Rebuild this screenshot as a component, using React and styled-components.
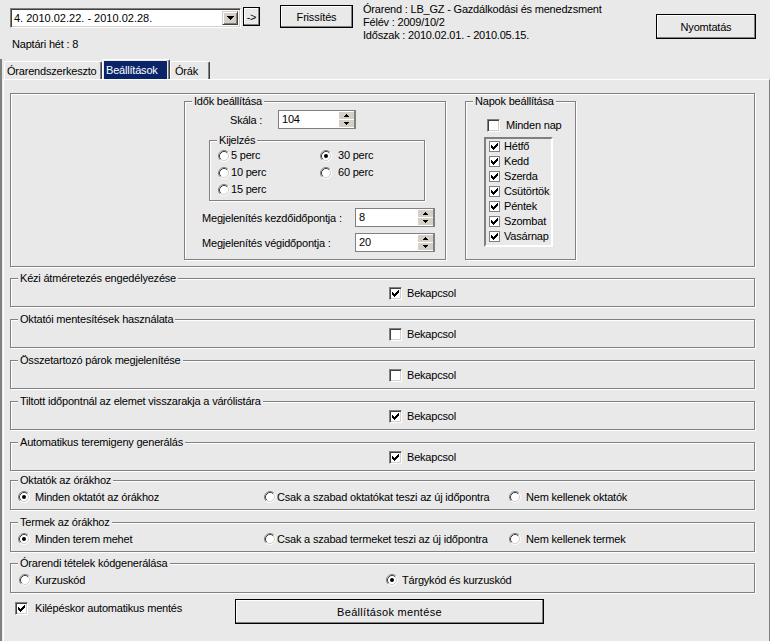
import React from 'react';
import styled, { createGlobalStyle, css } from 'styled-components';

const BG = '#e9e9e9';
const LINE = '#808080';
const FACE = '#d4d0c8';

const Global = createGlobalStyle`
  html, body { margin: 0; padding: 0; background: ${BG}; }
  body {
    font-family: "Liberation Sans", Arial, sans-serif;
    font-size: 11px;
    letter-spacing: -0.2px;
    color: #000;
  }
  #root { width: 770px; height: 641px; overflow: hidden; }
`;

const Window = styled.div`
  width: 770px;
  height: 641px;
  display: flex;
  flex-direction: column;
  background: ${BG};
  overflow: hidden;
`;

/* ---------- header ---------- */
const Header = styled.div`
  height: 59px;
  flex-shrink: 0;
  display: flex;
  align-items: flex-start;
  padding-left: 10px;
`;

const LeftCol = styled.div`
  width: 250px;
  padding-top: 7px;
  display: flex;
  flex-direction: column;
`;

const ComboRow = styled.div`
  display: flex;
  align-items: flex-start;
`;

const Combo = styled.div`
  width: 231px;
  height: 20px;
  margin-top: 1px;
  box-sizing: border-box;
  background: #fff;
  border: 1px solid;
  border-color: ${LINE} #fff #fff ${LINE};
  box-shadow: inset 1px 1px 0 #404040, inset -1px -1px 0 ${FACE};
  display: flex;
  align-items: center;
  padding: 0 2px 0 3px;
`;

const ComboText = styled.span`
  flex: 1;
  letter-spacing: 0;
  white-space: nowrap;
`;

const DropBtn = styled.span`
  width: 16px;
  height: 14px;
  box-sizing: border-box;
  background: ${FACE};
  border: 1px solid;
  border-color: ${FACE} #404040 #404040 ${FACE};
  box-shadow: inset 1px 1px 0 #fff, inset -1px -1px 0 ${LINE};
  display: flex;
  align-items: center;
  justify-content: center;
`;

const FlatButton = styled.button`
  font: inherit;
  letter-spacing: ${p => p.$ls ?? -0.2}px;
  color: #000;
  background: ${BG};
  width: ${p => p.$w}px;
  height: ${p => p.$h}px;
  margin: ${p => p.$m || '0'};
  padding: 0;
  box-sizing: border-box;
  border: 1px solid #000;
  box-shadow: inset -1px -1px 0 ${LINE}, inset 1px 1px 0 #fff;
  flex-shrink: 0;
  cursor: default;
`;

const WeekLabel = styled.div`
  margin-top: 10px;
  padding-left: 2px;
  line-height: 13px;
`;

const Info = styled.div`
  margin: 3px 0 0 10px;
  line-height: 13px;
  white-space: nowrap;
`;

/* ---------- tabs ---------- */
const TabArea = styled.div`
  flex: 1;
  display: flex;
  flex-direction: column;
  border-left: 2px solid ${LINE};
  min-height: 0;
`;

const TabBar = styled.div`
  height: 20px;
  flex-shrink: 0;
  display: flex;
  align-items: flex-end;
  padding-left: 2px;
`;

const Tab = styled.div`
  width: ${p => p.$w}px;
  height: ${p => (p.$active ? 20 : 18)}px;
  box-sizing: border-box;
  border-top: 1px solid #fff;
  border-left: 1px solid #fff;
  border-right: 1px solid #404040;
  box-shadow: inset -1px 0 0 ${LINE};
  border-radius: 2px 2px 0 0;
  padding: ${p => (p.$active ? '1px 2px 0 1px' : '1px 0 0 1px')};
  display: flex;
  overflow: hidden;
`;

const TabLabel = styled.span`
  flex: 1;
  line-height: ${p => (p.$active ? 18 : 16)}px;
  padding-left: ${p => p.$pl}px;
  background: ${p => (p.$active ? '#0a246a' : 'transparent')};
  color: ${p => (p.$active ? '#fff' : '#000')};
  white-space: nowrap;
`;

const Panel = styled.div`
  flex: 1;
  margin-left: 1px;
  border-top: 1px solid #fff;
  border-left: 1px solid #fff;
  border-right: 1px solid ${LINE};
  padding: 13px 0 0 6px;
  display: flex;
  flex-direction: column;
  align-items: flex-start;
`;

/* ---------- group boxes ---------- */
const etched = css`
  border: 1px solid ${LINE};
  box-shadow: inset 1px 1px 0 #fff, 1px 1px 0 #fff;
`;

const Bevel = styled.div`
  ${etched}
  box-sizing: border-box;
  width: 745px;
  height: 174px;
  display: flex;
  align-items: flex-start;
  padding: 7px 0 0 173px;
  flex-shrink: 0;
`;

const GroupBox = styled.div`
  ${etched}
  box-sizing: border-box;
  width: ${p => p.$w}px;
  height: ${p => p.$h}px;
  margin-top: ${p => p.$mt || 0}px;
  margin-left: ${p => p.$ml || 0}px;
  display: flex;
  flex-direction: column;
  flex-shrink: 0;
`;

const Caption = styled.div`
  align-self: flex-start;
  margin: -7px 0 0 7px;
  padding: 0 2px;
  height: 13px;
  line-height: 13px;
  background: ${BG};
  white-space: nowrap;
`;

const CheckRow = styled.div`
  height: 16px;
  display: flex;
  align-items: center;
  padding-left: ${p => p.$pl}px;
`;

const RadioRow = styled.div`
  height: 20px;
  display: grid;
  grid-template-columns: ${p => p.$cols};
  align-items: center;
  padding-left: ${p => p.$pl}px;
`;

/* ---------- controls ---------- */
const Item = styled.label`
  display: flex;
  align-items: center;
  gap: ${p => p.$gap ?? 5}px;
  white-space: nowrap;
  line-height: 13px;
`;

const Box3D = styled.span`
  width: 13px;
  height: 13px;
  box-sizing: border-box;
  background: #fff;
  border: 1px solid;
  border-color: ${LINE} #fff #fff ${LINE};
  box-shadow: inset 1px 1px 0 #404040, inset -1px -1px 0 ${FACE};
  display: inline-flex;
  align-items: center;
  justify-content: center;
  flex-shrink: 0;
`;

const BoxFlat = styled.span`
  width: 11px;
  height: 11px;
  box-sizing: border-box;
  background: #fff;
  border: 1px solid ${LINE};
  display: inline-flex;
  align-items: center;
  justify-content: center;
  flex-shrink: 0;
`;

const CHECK_STARTS = [2, 3, 4, 3, 2, 1, 0];
const Tick = () => (
  <svg width="7" height="7" viewBox="0 0 7 7" shapeRendering="crispEdges">
    {CHECK_STARTS.map((y, x) => (
      <rect key={x} x={x} y={y} width="1" height="3" fill="#000" />
    ))}
  </svg>
);

const CheckBox = ({ checked, label, gap = 6, flat }) => {
  const B = flat ? BoxFlat : Box3D;
  return (
    <Item $gap={gap}>
      <B>{checked && <Tick />}</B>
      <span>{label}</span>
    </Item>
  );
};

const RadioIcon = ({ checked }) => (
  <svg width="12" height="12" viewBox="0 0 12 12" style={{ flexShrink: 0 }}>
    <circle cx="6" cy="6" r="4.5" fill="#fff" />
    <path d="M2.11 9.89 A5.5 5.5 0 0 1 9.89 2.11" stroke={LINE} fill="none" />
    <path d="M9.89 2.11 A5.5 5.5 0 0 1 2.11 9.89" stroke="#fff" fill="none" />
    <path d="M2.82 9.18 A4.5 4.5 0 0 1 9.18 2.82" stroke="#404040" fill="none" />
    <path d="M9.18 2.82 A4.5 4.5 0 0 1 2.82 9.18" stroke={FACE} fill="none" />
    {checked && <circle cx="6" cy="6" r="2" fill="#000" />}
  </svg>
);

const Radio = ({ checked, label, gap = 5 }) => (
  <Item $gap={gap}>
    <RadioIcon checked={checked} />
    <span>{label}</span>
  </Item>
);

const SpinWrap = styled.div`
  width: ${p => p.$w}px;
  height: 19px;
  box-sizing: border-box;
  background: #fff;
  border: 1px solid ${LINE};
  border-right-width: 2px;
  display: flex;
  flex-shrink: 0;
`;

const SpinText = styled.span`
  flex: 1;
  padding-left: 3px;
  line-height: 17px;
`;

const SpinButtons = styled.span`
  width: 15px;
  display: flex;
  flex-direction: column;
  gap: 1px;
  padding: 1px 0;
  box-sizing: border-box;
`;

const SpinBtn = styled.span`
  flex: 1;
  background: ${FACE};
  display: flex;
  align-items: center;
  justify-content: center;
`;

const Arrow = ({ dir, w = 5, h = 3 }) => (
  <svg width={w} height={h} viewBox={`0 0 ${w} ${h}`} shapeRendering="crispEdges">
    <polygon
      points={dir === 'up' ? `${w / 2},0 ${w},${h} 0,${h}` : `0,0 ${w},0 ${w / 2},${h}`}
      fill="#000"
    />
  </svg>
);

const Spin = ({ value, w }) => (
  <SpinWrap $w={w}>
    <SpinText>{value}</SpinText>
    <SpinButtons>
      <SpinBtn><Arrow dir="up" /></SpinBtn>
      <SpinBtn><Arrow dir="down" /></SpinBtn>
    </SpinButtons>
  </SpinWrap>
);

/* ---------- inner layouts ---------- */
const FieldRow = styled.div`
  display: flex;
  align-items: center;
  margin-top: ${p => p.$mt}px;
  padding-left: ${p => p.$pl}px;
`;

const FieldLabel = styled.span`
  width: ${p => p.$w}px;
  white-space: nowrap;
  flex-shrink: 0;
`;

const RadioGrid = styled.div`
  display: grid;
  grid-template-columns: 102px auto;
  grid-auto-rows: 17px;
  align-items: center;
  padding-left: 8px;
`;

const MindenRow = styled.div`
  margin: 11px 0 0 21px;
`;

const CheckList = styled.div`
  width: 69px;
  margin: 5px 0 0 18px;
  box-sizing: border-box;
  border: 2px solid;
  border-color: ${LINE} #fff #fff ${LINE};
  padding: 0 0 1px 3px;
  display: flex;
  flex-direction: column;
`;

const ListItem = styled.div`
  height: 15px;
  display: flex;
  align-items: center;
`;

const BottomRow = styled.div`
  margin-top: 6px;
  height: 25px;
  display: flex;
  align-items: center;
  padding-left: 5px;
`;

const BottomCheck = styled.div`
  width: 220px;
  margin-top: -6px;
`;

const checkGroups = [
  ['Kézi átméretezés engedélyezése', true],
  ['Oktatói mentesítések használata', false],
  ['Összetartozó párok megjelenítése', false],
  ['Tiltott időpontnál az elemet visszarakja a várólistára', true],
  ['Automatikus teremigeny generálás', true],
];

const days = ['Hétfő', 'Kedd', 'Szerda', 'Csütörtök', 'Péntek', 'Szombat', 'Vasárnap'];

export default function App() {
  return (
    <Window>
      <Global />
      <Header>
        <LeftCol>
          <ComboRow>
            <Combo>
              <ComboText>4. 2010.02.22. - 2010.02.28.</ComboText>
              <DropBtn><Arrow dir="down" w={7} h={4} /></DropBtn>
            </Combo>
            <FlatButton $w={17} $h={19} $m="0 0 0 2px">-&gt;</FlatButton>
          </ComboRow>
          <WeekLabel>Naptári hét : 8</WeekLabel>
        </LeftCol>
        <FlatButton $w={73} $h={23} $m="5px 0 0 20px">Frissítés</FlatButton>
        <Info>
          <div>Órarend : LB_GZ - Gazdálkodási és menedzsment</div>
          <div>Félév : 2009/10/2</div>
          <div>Időszak : 2010.02.01. - 2010.05.15.</div>
        </Info>
        <FlatButton $w={100} $h={25} $m="14px 14px 0 auto">Nyomtatás</FlatButton>
      </Header>

      <TabArea>
        <TabBar>
          <Tab $w={98}><TabLabel $pl={1}>Órarendszerkeszto</TabLabel></Tab>
          <Tab $w={68} $active><TabLabel $active $pl={2}>Beállítások</TabLabel></Tab>
          <Tab $w={40}><TabLabel $pl={3}>Órák</TabLabel></Tab>
        </TabBar>

        <Panel>
          <Bevel>
            <GroupBox $w={262} $h={159}>
              <Caption>Idők beállítása</Caption>
              <FieldRow $mt={2} $pl={45}>
                <FieldLabel $w={48}>Skála :</FieldLabel>
                <Spin value="104" w={78} />
              </FieldRow>
              <GroupBox $w={216} $h={61} $mt={11} $ml={24}>
                <Caption>Kijelzés</Caption>
                <RadioGrid>
                  <Radio label="5 perc" gap={1} />
                  <Radio label="30 perc" checked gap={6} />
                  <Radio label="10 perc" gap={1} />
                  <Radio label="60 perc" gap={6} />
                  <Radio label="15 perc" gap={1} />
                </RadioGrid>
              </GroupBox>
              <FieldRow $mt={7} $pl={17}>
                <FieldLabel $w={153}>Megjelenítés kezdőidőpontja :</FieldLabel>
                <Spin value="8" w={80} />
              </FieldRow>
              <FieldRow $mt={6} $pl={17}>
                <FieldLabel $w={153}>Megjelenítés végidőpontja :</FieldLabel>
                <Spin value="20" w={80} />
              </FieldRow>
            </GroupBox>

            <GroupBox $w={111} $h={159} $ml={19}>
              <Caption>Napok beállítása</Caption>
              <MindenRow>
                <CheckBox label="Minden nap" />
              </MindenRow>
              <CheckList>
                {days.map(d => (
                  <ListItem key={d}>
                    <CheckBox flat checked label={d} gap={4} />
                  </ListItem>
                ))}
              </CheckList>
            </GroupBox>
          </Bevel>

          {checkGroups.map(([title, on], i) => (
            <GroupBox key={title} $w={745} $h={29} $mt={i === 0 ? 11 : 12}>
              <Caption>{title}</Caption>
              <CheckRow $pl={378}>
                <CheckBox checked={on} label="Bekapcsol" gap={5} />
              </CheckRow>
            </GroupBox>
          ))}

          <GroupBox $w={745} $h={30} $mt={9}>
            <Caption>Oktatók az órákhoz</Caption>
            <RadioRow $pl={7} $cols="246px 245px auto">
              <Radio checked label="Minden oktatót az órákhoz" gap={5} />
              <Radio label="Csak a szabad oktatókat teszi az új időpontra" gap={1} />
              <Radio label="Nem kellenek oktatók" gap={5} />
            </RadioRow>
          </GroupBox>

          <GroupBox $w={745} $h={30} $mt={12}>
            <Caption>Termek az órákhoz</Caption>
            <RadioRow $pl={7} $cols="246px 245px auto">
              <Radio checked label="Minden terem mehet" gap={5} />
              <Radio label="Csak a szabad termeket teszi az új időpontra" gap={1} />
              <Radio label="Nem kellenek termek" gap={5} />
            </RadioRow>
          </GroupBox>

          <GroupBox $w={745} $h={30} $mt={11}>
            <Caption>Órarendi tételek kódgenerálása</Caption>
            <RadioRow $pl={8} $cols="367px auto">
              <Radio label="Kurzuskód" gap={4} />
              <Radio checked label="Tárgykód és kurzuskód" gap={4} />
            </RadioRow>
          </GroupBox>

          <BottomRow>
            <BottomCheck>
              <CheckBox checked label="Kilépéskor automatikus mentés" gap={7} />
            </BottomCheck>
            <FlatButton $w={309} $h={25} $ls={0.3}>Beállítások mentése</FlatButton>
          </BottomRow>
        </Panel>
      </TabArea>
    </Window>
  );
}
